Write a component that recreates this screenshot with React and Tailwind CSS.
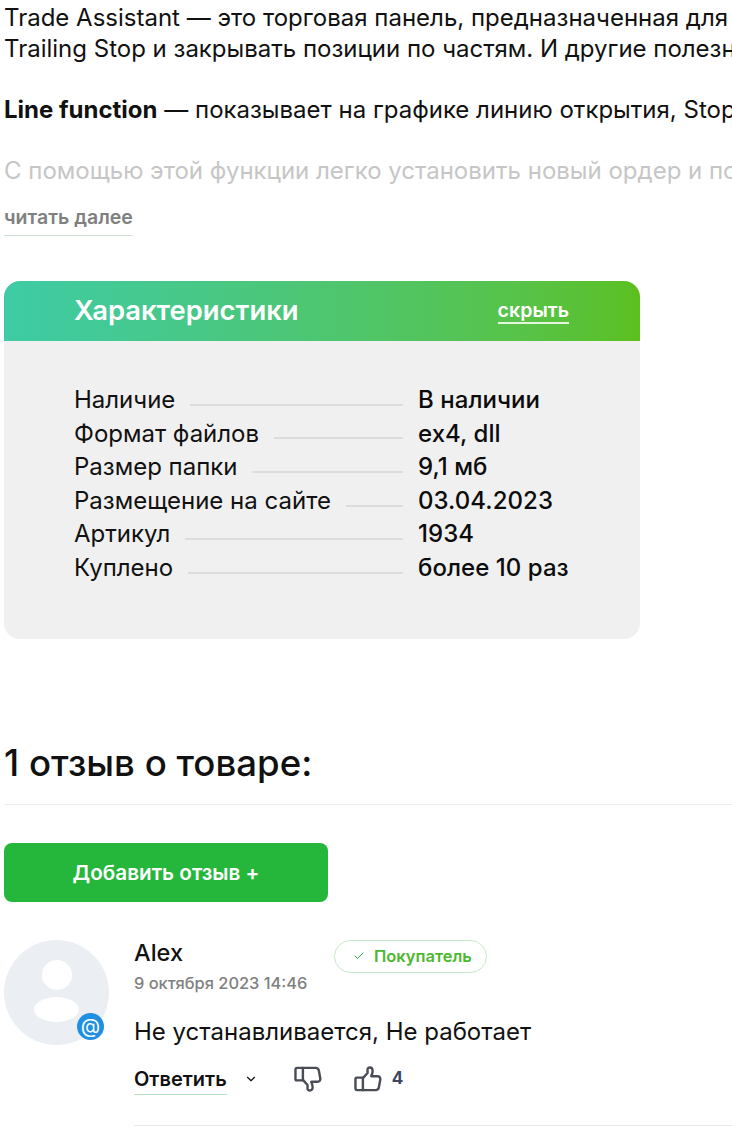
import { Check, ChevronDown } from 'lucide-react'

const specs = [
  ['Наличие', 'В наличии'],
  ['Формат файлов', 'ex4, dll'],
  ['Размер папки', '9,1 мб'],
  ['Размещение на сайте', '03.04.2023'],
  ['Артикул', '1934'],
  ['Куплено', 'более 10 раз'],
]

function ThumbUp({ className }) {
  return (
    <svg viewBox="0 0 30 28" fill="none" stroke="#4a4d55" strokeWidth="2.6" strokeLinejoin="round" strokeLinecap="round" className={className}>
      <path d="M3 12.500h6.500V26H3.500a2 2 0 0 1-2-2V14a1.500 1.500 0 0 1 1.500-1.500z" />
      <path d="M9.500 13 14.500 7.500V3.500C14.500 1 19.500.8 20 4.500c.3 2.500-1 5-1.500 6.500h6.500c2.500 0 3.600 1.700 3.200 3.700l-1.500 8.300c-.4 2-1.700 3-3.500 3H9.500" />
    </svg>
  )
}

export default function App() {
  return (
    <div className="h-[1140px] w-[732px] overflow-hidden bg-white font-['Inter',sans-serif] text-[#111]">
      <div className="pl-1 pt-[3px] whitespace-nowrap text-[24px] leading-[30.6px]">
        <p>Trade Assistant — это торговая панель, предназначенная для открытия ордеров</p>
        <p>Trailing Stop и закрывать позиции по частям. И другие полезные функции</p>
        <p className="mt-[30.6px]"><b className="font-bold">Line function</b> — показывает на графике линию открытия, Stop Loss</p>
        <p className="mt-[30.6px] text-[#c6c6c6]">С помощью этой функции легко установить новый ордер и позицию</p>
      </div>

      <div className="ml-1 mt-[17px] w-fit border-b border-[#cfe3d5] pb-[5px] text-[19.5px] font-semibold leading-[26px] text-[#808080]">
        читать далее
      </div>

      <section className="ml-1 mt-[45px] h-[358px] w-[636px] overflow-hidden rounded-2xl bg-[#f0f0f0]">
        <div className="flex h-[60px] items-center justify-between bg-gradient-to-r from-[#3ecba5] to-[#5cc01e] pl-[70px] pr-[71px] text-white">
          <h2 className="text-[27.4px] font-semibold">Характеристики</h2>
          <span className="border-b-2 border-[#e6f5df] text-[19.6px] font-semibold leading-[24px]">скрыть</span>
        </div>
        <dl className="pl-[70px] pr-[40px] pt-[42.5px] text-[24px] leading-[33.6px]">
          {specs.map(([name, value]) => (
            <div key={name} className="flex">
              <dt className="flex w-[329px] shrink-0 items-center">
                <span>{name}</span>
                <span className="ml-[15px] mt-[10px] h-[2px] flex-1 bg-[#dcdcdc]" />
              </dt>
              <dd className="ml-[15px] font-medium tracking-[0.05px] text-[#0c0c0c]">{value}</dd>
            </div>
          ))}
        </dl>
      </section>

      <h2 className="ml-1 mt-[102px] text-[36.6px] font-medium leading-[44px]">1 отзыв о товаре:</h2>
      <div className="ml-1 mt-[19px] h-px bg-[#ececec]" />

      <button className="ml-1 mt-[38px] block h-[59px] w-[324px] rounded-lg bg-[#24b73c] text-[20.7px] font-semibold text-white">
        Добавить отзыв +
      </button>

      <div className="ml-1 mt-[38px] flex">
        <div className="relative h-[105px] w-[105px] shrink-0 overflow-visible rounded-full bg-[#ebeff4]">
          <div className="mx-auto mt-5 h-[30px] w-[30px] rounded-full bg-white" />
          <div className="mx-auto mt-[7px] h-[25px] w-[45px] rounded-[50%] bg-white" />
          <div className="absolute left-[73px] top-[73px] flex h-[27px] w-[27px] items-center justify-center rounded-full bg-[#1e8fe1] text-[20px] leading-none text-white">
            @
          </div>
        </div>

        <div className="ml-[25px] flex-1">
          <div className="flex items-start">
            <div className="w-[200px]">
              <div className="-mt-px text-[23.5px] font-medium leading-[28px]">Alex</div>
              <div className="mt-[5px] text-[16.4px] font-medium leading-[22px] text-[#808080]">9 октября 2023 14:46</div>
            </div>
            <div className="flex h-[33px] items-center rounded-full border border-[#c5e8c8] pl-[18px] pr-[14px] text-[16.5px] font-semibold text-[#4cb92f]">
              <Check size={12} strokeWidth={2} className="mr-[9px] text-[#2fae3f]" />
              Покупатель
            </div>
          </div>
          <p className="mt-[23px] text-[24px] leading-[30px]">Не устанавливается, Не работает</p>
          <div className="mt-[19px] flex items-center">
            <span className="border-b border-[#b9e3c1] pb-[3px] text-[20px] font-semibold leading-[24px]">Ответить</span>
            <ChevronDown size={14} strokeWidth={2} className="ml-[17px] mb-1" />
            <ThumbUp className="ml-[36px] mb-1 h-[26px] w-[28px] rotate-180 -scale-x-100" />
            <ThumbUp className="ml-[32px] mb-1 h-[26px] w-[28px]" />
            <span className="ml-[10px] mb-1 text-[17px] font-bold text-[#3d4560]">4</span>
          </div>
          <div className="mt-[29px] h-px bg-[#e8e8e8]" />
        </div>
      </div>
    </div>
  )
}
